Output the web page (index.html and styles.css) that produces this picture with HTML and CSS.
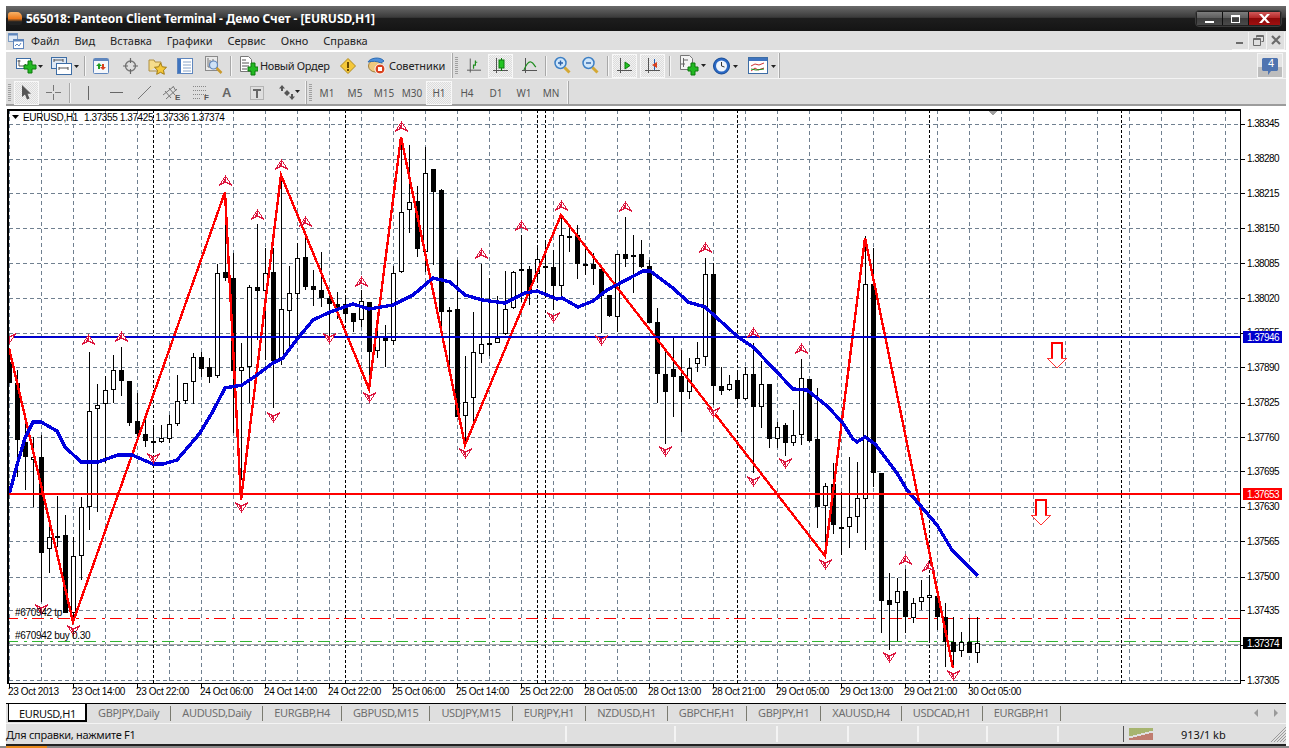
FILE: index.html
```html
<!DOCTYPE html>
<html lang="ru">
<head>
<meta charset="utf-8">
<title>565018: Panteon Client Terminal - Демо Счет - [EURUSD,H1]</title>
<link rel="stylesheet" href="styles.css">
</head>
<body>
<div class="window">
  <header class="titlebar">
    <span class="app-icon"></span>
    <span class="title">565018: Panteon Client Terminal - Демо Счет - [EURUSD,H1]</span>
    <div class="win-buttons">
      <span class="wb wb-min"><i></i></span>
      <span class="wb wb-max"><i></i></span>
      <span class="wb wb-close">
        <svg width="15" height="11" viewBox="0 0 15 11"><path d="M2 1h3l2.500 3L10 1h3L9 5.500 13 10h-3L7.500 7 5 10H2l4-4.500z" fill="#fff"/></svg>
      </span>
    </div>
  </header>

  <nav class="menubar">
    <svg class="doc-icon" width="16" height="16" viewBox="0 0 16 16"><rect x="0.500" y="0.500" width="9" height="8" fill="#dfe9f5" stroke="#7d9cc4"/><rect x="0.500" y="0.500" width="9" height="2" fill="#5f86bd"/><rect x="5.500" y="6.500" width="10" height="9" fill="#fff" stroke="#5f86bd"/><rect x="5.500" y="6.500" width="10" height="2" fill="#5f86bd"/><path d="M7 13l2-2 2 2 2-3" fill="none" stroke="#5f86bd"/></svg>
    <span class="m m1">Файл</span>
    <span class="m">Вид</span>
    <span class="m">Вставка</span>
    <span class="m">Графики</span>
    <span class="m">Сервис</span>
    <span class="m">Окно</span>
    <span class="m">Справка</span>
    <div class="mdi">
      <span class="mdi-b"><svg width="10" height="10" viewBox="0 0 10 10"><rect x="1" y="7" width="7" height="2" fill="#6b6b6b"/></svg></span>
      <span class="mdi-b"><svg width="11" height="11" viewBox="0 0 11 11"><path d="M3.500 2.500V.5h7v6h-2M.5 3.500h7v7h-7zM.5 4.500h7M3.500 1.500h7" fill="none" stroke="#6b6b6b"/></svg></span>
      <span class="mdi-b"><svg width="10" height="10" viewBox="0 0 10 10"><path d="M1 1l8 8M9 1L1 9" stroke="#6b6b6b" stroke-width="2.200"/></svg></span>
    </div>
  </nav>

  <div class="toolrow row1">
    <span class="tb w27 ml10"><svg width="27" height="20" viewBox="0 0 27 20"><rect x="0.500" y="2.500" width="14" height="10" fill="#fff" stroke="#3d6da5"/><path d="M3 4v6h8M1.500 5h3M9 8l2 2-2 2" fill="none" stroke="#555"/><path d="M8 9h4V5h4v4h4v4h-4v4h-4v-4H8z" fill="#22b822" stroke="#0c7a0c"/><path d="M22 9h5l-2.500 3z" fill="#222"/></svg></span>
    <span class="tb w29 ml8"><svg width="29" height="20" viewBox="0 0 29 20"><rect x="0.500" y="1.500" width="15" height="11" fill="#dfe9f5" stroke="#3d6da5"/><rect x="5.500" y="7.500" width="15" height="11" fill="#fff" stroke="#3d6da5"/><path d="M3 4h9M3 3v3M12 3v3M8 12h9M8 11v3M17 11v3" stroke="#555" fill="none"/><path d="M23 9h5l-2.500 3z" fill="#222"/></svg></span>
    <span class="sep ml4"></span>
    <span class="tb w17 ml7"><svg width="17" height="18" viewBox="0 0 17 18"><rect x="0.500" y="1.500" width="15" height="15" rx="1" fill="#f4f7fb" stroke="#5f86bd"/><rect x="1" y="2" width="14" height="2" fill="#5f86bd"/><path d="M6 6l3 3H7v3H5V9H3z" fill="#1f9d1f"/><path d="M10 13l3-3h-2V7H9v3H7z" fill="#d9411e"/></svg></span>
    <span class="tb w17 ml12"><svg width="17" height="18" viewBox="0 0 17 18"><circle cx="8.500" cy="9" r="5" fill="none" stroke="#777" stroke-width="1.400"/><path d="M8.500 1v5M8.500 12v5M1 9h5M11 9h5" stroke="#666" stroke-width="1.200"/></svg></span>
    <span class="tb w19 ml9"><svg width="19" height="18" viewBox="0 0 19 18"><path d="M1 14V3h5l1 2h6v3" fill="#f5dc8c" stroke="#b09040"/><path d="M1 14h8" stroke="#b09040"/><path d="M12.500 6l1.800 3.800 4.200.5-3 2.900.8 4.100-3.800-2-3.800 2 .8-4.100-3-2.900 4.200-.5z" fill="#f5c83a" stroke="#a07a10"/></svg></span>
    <span class="tb w16 ml10"><svg width="16" height="18" viewBox="0 0 16 18"><rect x="0.500" y="1.500" width="15" height="15" fill="#fff" stroke="#5f86bd"/><rect x="1" y="2" width="3" height="14" fill="#3f74bf"/><path d="M6 5h8M6 8h8M6 11h8M6 14h8" stroke="#8aa5c8"/></svg></span>
    <span class="tb w18 ml12"><svg width="18" height="19" viewBox="0 0 18 19"><rect x="0.500" y="0.500" width="12" height="14" fill="#e9e9e9" stroke="#8a8a8a"/><path d="M3 2v9h8M5 4v4M8 3v5" stroke="#777" fill="none"/><circle cx="8.500" cy="9" r="4" fill="#cfe2f6" stroke="#5f86bd" stroke-width="1.200"/><path d="M11.500 12l5 5" stroke="#c99a2e" stroke-width="2.500"/></svg></span>
    <span class="sep ml7"></span>
    <span class="tb w18 ml8"><svg width="18" height="20" viewBox="0 0 18 20"><path d="M0.500 0.500h8l3 3v12h-11z" fill="#fff" stroke="#777"/><path d="M2 4h4M2 7h7M2 10h7M2 13h5" stroke="#555"/><path d="M8 11h3V7h4v4h3v4h-3v4h-4v-4H8z" fill="#22b822" stroke="#0c7a0c"/></svg></span>
    <span class="tb-text t-order">Новый Ордер</span>
    <span class="tb w16 ml11"><svg width="16" height="16" viewBox="0 0 16 16"><path d="M8 .5L15.500 8 8 15.500.5 8z" fill="#f5c83a" stroke="#b08a20"/><path d="M7 4h2v6H7zM7 11h2v2H7z" fill="#6a4a00"/></svg></span>
    <span class="tb w19 ml11"><svg width="19" height="19" viewBox="0 0 19 19"><ellipse cx="8.500" cy="10" rx="7" ry="6" fill="#f0c97e" stroke="#a0803a"/><path d="M1 6c2-4 12-6 16-1l-3 2c-4-2-9-2-13-1z" fill="#4f8fd9" stroke="#2d6cb3"/><circle cx="13" cy="13" r="5" fill="#d9411e" stroke="#fff"/><rect x="11" y="11" width="4" height="4" fill="#fff"/></svg></span>
    <span class="tb-text t-exp">Советники</span>
    <span class="bar-end b1"></span>
    <span class="gripper"></span>
    <span class="tb w14 ml9"><svg width="15" height="16" viewBox="0 0 15 16"><path d="M3.500 0v15M0 12.500h15" fill="none" stroke="#555"/><path d="M7 11V7h2V2" fill="none" stroke="#1f8d1f" stroke-width="1.300"/><path d="M9 4h2" stroke="#1f8d1f"/></svg></span>
    <span class="tb btn-on ml7"><svg width="15" height="17" viewBox="0 0 15 17"><path d="M3.500 1v15M0 13.500h15" stroke="#555" fill="none"/><path d="M8.500 1v13" stroke="#0c7a0c"/><rect x="6" y="3" width="5" height="8" fill="#22c422" stroke="#0c7a0c"/></svg></span>
    <span class="tb w15 ml9"><svg width="15" height="16" viewBox="0 0 15 16"><path d="M3.500 0v15M0 12.500h15" stroke="#555" fill="none"/><path d="M2 12C4 7 6 3 9 4s3 4 5 5" fill="none" stroke="#1f8d1f" stroke-width="1.200"/></svg></span>
    <span class="sep ml8"></span>
    <span class="tb w17 ml7"><svg width="17" height="19" viewBox="0 0 17 19"><circle cx="6.500" cy="7" r="5.500" fill="#cfe6fa" stroke="#3d7fc4" stroke-width="1.500"/><path d="M4 7h5M6.500 4.500v5" stroke="#2a60a8" stroke-width="1.400"/><path d="M10.500 11.500l5 5" stroke="#d4a834" stroke-width="3"/></svg></span>
    <span class="tb w17 ml11"><svg width="17" height="19" viewBox="0 0 17 19"><circle cx="6.500" cy="7" r="5.500" fill="#cfe6fa" stroke="#3d7fc4" stroke-width="1.500"/><path d="M4 7h5" stroke="#2a60a8" stroke-width="1.400"/><path d="M10.500 11.500l5 5" stroke="#d4a834" stroke-width="3"/></svg></span>
    <span class="sep ml8"></span>
    <span class="tb btn-on ml3"><svg width="15" height="17" viewBox="0 0 15 17"><path d="M3.500 1v15M0 13.500h15" stroke="#555" fill="none"/><path d="M8 5l5 3.500-5 3.500z" fill="#22c422" stroke="#0c7a0c"/></svg></span>
    <span class="tb btn-on ml3"><svg width="15" height="17" viewBox="0 0 15 17"><path d="M3.500 1v15M0 13.500h15" stroke="#555" fill="none"/><path d="M9.500 2v11" stroke="#1f5fb8"/><path d="M7 8l5-3v6z" fill="#d9411e"/></svg></span>
    <span class="sep ml4"></span>
    <span class="tb w26 ml9"><svg width="26" height="21" viewBox="0 0 26 21"><path d="M0.500 0.500h9l3 3v11h-12z" fill="#f4f4f4" stroke="#777"/><path d="M3.500 3v9M1 9h4M3 5h5" fill="none" stroke="#666"/><path d="M8 12h3V8h4v4h3v4h-3v4h-4v-4H8z" fill="#22b822" stroke="#0c7a0c"/><path d="M21 9h5l-2.500 3z" fill="#222"/></svg></span>
    <span class="tb w25 ml7"><svg width="25" height="20" viewBox="0 0 25 20"><circle cx="8.500" cy="10" r="8" fill="#2a68c4" stroke="#154a94"/><circle cx="8.500" cy="10" r="5.500" fill="#eef4fb"/><path d="M8.500 6v4l3 1" fill="none" stroke="#333"/><path d="M20 9h5l-2.500 3z" fill="#222"/></svg></span>
    <span class="tb w28 ml10"><svg width="28" height="18" viewBox="0 0 28 18"><rect x="0.500" y="0.500" width="19" height="16" fill="#fff" stroke="#3d6da5"/><rect x="1" y="1" width="18" height="3" fill="#3f74bf"/><path d="M3 9l4-2 4 1 5-2M3 14l4-3 3 2 6-2" fill="none" stroke="#c33"/><path d="M3 12l5 1 8-1" fill="none" stroke="#1f8d1f"/><path d="M23 8h5l-2.500 3z" fill="#222"/></svg></span>
    <span class="bar-end b2"></span>
    <span class="notify">
      <svg width="16" height="17" viewBox="0 0 16 17"><path d="M1 0h14l1 1v11l-1 1H9l-3 4v-4H1l-1-1V1z" fill="#4f74b0"/></svg>
      <b>4</b>
    </span>
  </div>

  <div class="toolrow row2">
    <span class="gripper g0"></span>
    <span class="tb btn-on cur"><svg width="11" height="15" viewBox="0 0 11 15"><path d="M1 0v12l3-2.500 2 5 2.500-1-2-4.700H10z" fill="#555"/></svg></span>
    <span class="tb w15 ml7"><svg width="15" height="15" viewBox="0 0 15 15"><path d="M7.500 0v6M7.500 9v6M0 7.500h6M9 7.500h6" stroke="#777"/></svg></span>
    <span class="sep ml8"></span>
    <span class="tb w3 ml16"><svg width="3" height="14" viewBox="0 0 3 14"><path d="M1.500 0v14" stroke="#666"/></svg></span>
    <span class="tb w13 ml20"><svg width="13" height="3" viewBox="0 0 13 3"><path d="M0 1.500h13" stroke="#666"/></svg></span>
    <span class="tb w13 ml15"><svg width="13" height="13" viewBox="0 0 13 13"><path d="M0 13L13 0" stroke="#777"/></svg></span>
    <span class="tb w18 ml12"><svg width="18" height="18" viewBox="0 0 18 18"><path d="M0 11L10 3M3 15L14 5M2 7l6 7M6 4l6 7M10 2l3 5" stroke="#777" fill="none"/><text x="12" y="16" class="mini">E</text></svg></span>
    <span class="tb w17 ml12"><svg width="17" height="18" viewBox="0 0 17 18"><path d="M0 2.500h14M0 6.500h14M0 10.500h14M0 14.500h8" stroke="#888" stroke-dasharray="1 1"/><text x="11" y="16" class="mini">F</text></svg></span>
    <span class="tb-letter">A</span>
    <span class="tb w14 ml16"><svg width="14" height="14" viewBox="0 0 14 14"><rect x="0.500" y="0.500" width="13" height="13" fill="none" stroke="#888" stroke-dasharray="1 1"/><path d="M3 3h8v2H8v7H6V5H3z" fill="#666"/></svg></span>
    <span class="tb w22 ml14"><svg width="22" height="16" viewBox="0 0 22 16"><path d="M4 0l3 3.500H5V6H3V3.500H1zM9 5l3 3-3 3-3-3zM14 15l-3-3.500h2V9h2v2.500h2z" fill="#555"/><path d="M17 5h5l-2.500 3z" fill="#222"/></svg></span>
    <span class="bar-end b3"></span>
    <span class="gripper g2"></span>
    <span class="per p1">M1</span>
    <span class="per p2">M5</span>
    <span class="per p3">M15</span>
    <span class="per p4">M30</span>
    <span class="per per-on">H1</span>
    <span class="per p5">H4</span>
    <span class="per p6">D1</span>
    <span class="per p7">W1</span>
    <span class="per p8">MN</span>
    <span class="bar-end b4"></span>
  </div>

  <main class="chartbox">
    <svg id="chart" class="chart" width="1280" height="597" viewBox="6 106 1280 597">
      <g id="plot"></g>
      <path d="M12 115h7l-3.500 4z" fill="#000"/>
      <text x="23" y="121" class="t tight">EURUSD,H1</text>
      <text x="84" y="121" class="t tight2">1.37355 1.37425 1.37336 1.37374</text>
      <text x="15" y="616" class="t tight">#670942 tp</text>
      <text x="15" y="639" class="t tight">#670942 buy 0.30</text>
      <g class="t price">
        <text x="1247" y="127">1.38345</text>
        <text x="1247" y="162">1.38280</text>
        <text x="1247" y="197">1.38215</text>
        <text x="1247" y="232">1.38150</text>
        <text x="1247" y="267">1.38085</text>
        <text x="1247" y="302">1.38020</text>
        <text x="1247" y="336">1.37955</text>
        <text x="1247" y="371">1.37890</text>
        <text x="1247" y="406">1.37825</text>
        <text x="1247" y="441">1.37760</text>
        <text x="1247" y="475">1.37695</text>
        <text x="1247" y="510">1.37630</text>
        <text x="1247" y="545">1.37565</text>
        <text x="1247" y="580">1.37500</text>
        <text x="1247" y="614">1.37435</text>
        <text x="1247" y="684">1.37305</text>
      </g>
      <rect x="1243" y="331" width="39" height="12" fill="#0000cd"/>
      <text x="1247" y="341" class="t w price1">1.37946</text>
      <rect x="1243" y="488" width="39" height="12" fill="#ff0000"/>
      <text x="1247" y="498" class="t w price1">1.37653</text>
      <rect x="1243" y="637" width="39" height="12" fill="#000"/>
      <text x="1247" y="647" class="t w price1">1.37374</text>
      <g class="t dates">
        <text x="8" y="695">23 Oct 2013</text>
        <text x="72" y="695">23 Oct 14:00</text>
        <text x="136" y="695">23 Oct 22:00</text>
        <text x="200" y="695">24 Oct 06:00</text>
        <text x="264" y="695">24 Oct 14:00</text>
        <text x="328" y="695">24 Oct 22:00</text>
        <text x="392" y="695">25 Oct 06:00</text>
        <text x="456" y="695">25 Oct 14:00</text>
        <text x="520" y="695">25 Oct 22:00</text>
        <text x="584" y="695">28 Oct 05:00</text>
        <text x="648" y="695">28 Oct 13:00</text>
        <text x="712" y="695">28 Oct 21:00</text>
        <text x="776" y="695">29 Oct 05:00</text>
        <text x="840" y="695">29 Oct 13:00</text>
        <text x="904" y="695">29 Oct 21:00</text>
        <text x="968" y="695">30 Oct 05:00</text>
      </g>
    </svg>
  </main>

  <div class="tabs">
    <span class="tab tab-on">EURUSD,H1</span>
    <span class="tab">GBPJPY,Daily</span>
    <span class="tab">AUDUSD,Daily</span>
    <span class="tab">EURGBP,H4</span>
    <span class="tab">GBPUSD,M15</span>
    <span class="tab">USDJPY,M15</span>
    <span class="tab">EURJPY,H1</span>
    <span class="tab">NZDUSD,H1</span>
    <span class="tab">GBPCHF,H1</span>
    <span class="tab">GBPJPY,H1</span>
    <span class="tab">XAUUSD,H4</span>
    <span class="tab">USDCAD,H1</span>
    <span class="tab">EURGBP,H1</span>
    <span class="tab-nav"><svg width="24" height="9" viewBox="0 0 24 9"><path d="M4 0v8L0 4zM20 0v8l4-4z" fill="#9a9a9a"/></svg></span>
  </div>

  <footer class="status">
    <span class="st-help">Для справки, нажмите F1</span>
    <span class="st c1"></span>
    <span class="st c2"></span>
    <span class="st c3"></span>
    <span class="st c4"></span>
    <span class="st c5"></span>
    <span class="st c6"></span>
    <span class="st c7"></span>
    <span class="st c8">
      <svg width="24" height="13" viewBox="0 0 24 13" class="conn"><path d="M1 0v8M3 0v8M5 0v7M7 0v7M9 0v6M11 0v6M13 0v5M15 0v5M17 0v4M19 0v4M21 0v3M23 0v3" stroke="#6f8a00"/><path d="M1 12v-2M3 12v-2M5 12v-3M7 12v-3M9 12v-4M11 12v-4M13 12V7M15 12V7M17 12V6M19 12V6M21 12V5M23 12V5" stroke="#a01a00"/></svg>
      <span class="kb">913/1 kb</span>
      <svg width="15" height="15" viewBox="0 0 15 15" class="grip"><path d="M15 0L0 15M15 3L3 15M15 6L6 15M15 9L9 15M15 12L12 15" stroke="#9a9a9a"/></svg>
    </span>
  </footer>
  <div class="frame-bottom"></div>
</div>
<div class="taskbar"><span class="task-orange"></span></div>
<script src="chart.js"></script>
</body>
</html>
```

FILE: styles.css
```css
* { box-sizing: border-box; }
html, body { margin: 0; padding: 0; height: 748px; overflow: hidden; background: #fff; }
body { font: 11px "Noto Sans", "Liberation Sans", sans-serif; color: #333; position: relative; }
.window { margin: 6px 0 0 6px; width: 1280px; display: flex; flex-direction: column; background: #e0e0e0; }

.titlebar { height: 25px; display: flex; align-items: center; background: linear-gradient(#6a6a6a 0, #3a3a3a 45%, #1d1d1d 50%, #141414 100%); flex: none; }
.app-icon { width: 14px; height: 13px; margin-left: 2px; border-radius: 3px 5px 3px 3px; background: linear-gradient(#f7b267 0, #ee7a1c 50%, #222 75%); flex: none; }
.title { margin-left: 4px; color: #fff; font: bold 12px "Noto Sans", sans-serif; letter-spacing: -0.05px; white-space: nowrap; }
.win-buttons { margin-left: auto; margin-right: 4px; display: flex; padding: 1px; border: 1px solid #3c3c3c; border-radius: 4px; background: #222; }
.wb { width: 26px; height: 13px; display: flex; align-items: center; justify-content: center; border-right: 1px solid #111; background: linear-gradient(#7d7d7d, #5a5a5a 50%, #3d3d3d 50%, #4a4a4a); }
.wb-close { width: 31px; border: 0; background: linear-gradient(#d15a5a, #b02020 50%, #8c0808 50%, #a01010); }
.wb-min i { width: 9px; height: 2px; background: #fff; margin-top: 6px; }
.wb-max i { width: 9px; height: 8px; border: 1px solid #fff; border-top-width: 2px; }

.menubar { height: 20px; display: flex; align-items: center; gap: 15px; background: #dfdfdf; color: #222; border-bottom: 1px solid #fff; flex: none; font-size: 11px; }
.doc-icon { margin-left: 2px; margin-right: -8px; flex: none; }
.m { white-space: nowrap; }
.mdi { margin-left: auto; display: flex; gap: 1px; margin-right: 1px; }
.mdi-b { width: 17px; height: 18px; display: flex; align-items: center; justify-content: center; border-right: 1px solid #f4f4f4; border-bottom: 1px solid #f4f4f4; }

.toolrow { display: flex; align-items: center; flex: none; background: #dedede; color: #444; }
.row1 { height: 27px; padding-top: 1px; border-top: 1px solid #fff; }
.row2 { height: 28px; padding-top: 2px; border-top: 1px solid #f4f4f4; border-bottom: 2px solid #9c9c9c; }
.tb { display: inline-flex; align-items: center; justify-content: center; flex: none; }
.tb svg { display: block; }
.w3 { width: 3px; } .w13 { width: 13px; } .w14 { width: 14px; } .w15 { width: 15px; } .w16 { width: 16px; } .w17 { width: 17px; } .w18 { width: 18px; } .w19 { width: 19px; } .w22 { width: 22px; } .w25 { width: 25px; } .w26 { width: 26px; } .w27 { width: 27px; } .w28 { width: 28px; } .w29 { width: 29px; }
.ml3 { margin-left: 3px; } .ml4 { margin-left: 4px; } .ml7 { margin-left: 7px; } .ml8 { margin-left: 8px; } .ml9 { margin-left: 9px; } .ml10 { margin-left: 10px; } .ml11 { margin-left: 11px; } .ml12 { margin-left: 12px; } .ml14 { margin-left: 14px; } .ml15 { margin-left: 15px; } .ml16 { margin-left: 16px; } .ml20 { margin-left: 20px; }
.sep { width: 2px; height: 20px; flex: none; border-left: 1px solid #a8a8a8; border-right: 1px solid #f6f6f6; }
.tb-text { white-space: nowrap; color: #222; flex: none; }
.t-order { margin-left: 2px; width: 69px; letter-spacing: -0.35px; }
.t-exp { margin-left: 3px; width: 56px; letter-spacing: -0.1px; }
.bar-end { width: 2px; align-self: stretch; flex: none; border-left: 1px solid #f4f4f4; border-right: 1px solid #a8a8a8; }
.b1 { margin-left: 6px; }
.b2 { margin-left: 2px; }
.b3 { margin-left: 5px; }
.b4 { margin-left: 7px; }
.gripper { width: 3px; height: 18px; flex: none; margin-left: 2px; background: repeating-linear-gradient(#a0a0a0 0 1px, transparent 1px 2px); }
.btn-on { width: 25px; height: 24px; background-color: #eeeeee; background-image: repeating-conic-gradient(#dcdcdc 0 25%, #f2f2f2 0 50%); background-size: 2px 2px; border: 1px solid #f8f8f8; }
.g0 { margin-left: 2px; }
.cur { margin-left: 3px; }
.mini { font: bold 8px "Liberation Sans", sans-serif; fill: #555; }
.tb-letter { font: bold 13px "Liberation Sans", sans-serif; color: #666; margin-left: 12px; width: 12px; flex: none; }
.per { color: #555; font-size: 10px; flex: none; text-align: center; }
.p1 { margin-left: 6px; width: 18px; }
.p2 { margin-left: 10px; width: 18px; }
.p3 { margin-left: 8px; width: 24px; }
.p4 { margin-left: 4px; width: 24px; }
.per-on { margin-left: 2px; width: 26px; height: 24px; line-height: 22px; background-color: #eee; background-image: repeating-conic-gradient(#dcdcdc 0 25%, #f2f2f2 0 50%); background-size: 2px 2px; border: 1px solid #f8f8f8; }
.p5 { margin-left: 6px; width: 18px; }
.p6 { margin-left: 11px; width: 18px; }
.p7 { margin-left: 10px; width: 18px; }
.p8 { margin-left: 9px; width: 18px; }
.notify { margin-left: auto; margin-right: 3px; width: 26px; height: 25px; position: relative; display: flex; justify-content: center; align-items: flex-start; padding-top: 4px; border: 1px solid #f4f4f4; background: linear-gradient(#e4e4e4 55%, #bdbdbd 55%); flex: none; }
.notify b { position: absolute; left: 10px; top: 3px; color: #fff; font: 11px "Liberation Sans", sans-serif; }

.chartbox { height: 597px; background: #fff; flex: none; }
.chart { display: block; }
.t, .t text { font: 10px "Liberation Sans", sans-serif; fill: #000; }
.tight { letter-spacing: -0.3px; }
.tight2 { letter-spacing: -0.4px; }
.price text, .price1 { letter-spacing: -0.6px; }
.dates text { letter-spacing: -0.35px; }
.t.w { fill: #fff; }

.tabs { height: 21px; display: flex; align-items: flex-start; flex: none; border-top: 1px solid #000; background: #dfdfdf; color: #6f6f6f; border-bottom: 1px solid #f4f4f4; font-size: 11px; }
.tab { padding: 0 11px; height: 15px; margin-top: 2px; border-right: 1px solid #7a7a70; white-space: nowrap; line-height: 14px; letter-spacing: -0.35px; }
.tab-on { margin-left: 2px; margin-top: -1px; width: 79px; height: 19px; background: #fff; color: #111; border: 1px solid #000; border-width: 1px 2px 2px 1px; padding: 3px 0 0 10px; }
.tab-nav { margin-left: auto; margin-right: 8px; align-self: center; }

.status { height: 20px; display: flex; align-items: center; background: #dfdfdf; color: #111; flex: none; font-size: 11px; }
.st-help { white-space: nowrap; width: 559px; letter-spacing: -0.27px; flex: none; }
.st { height: 16px; border-left: 2px solid #f4f4f4; flex: none; }
.c1 { width: 109px; }
.c2 { width: 102px; }
.c3 { width: 71px; }
.c4 { width: 70px; }
.c5 { width: 69px; }
.c6 { width: 71px; }
.c7 { width: 66px; }
.c8 { width: 163px; border-left: 1px solid #555; display: flex; align-items: center; }
.conn { margin-left: 5px; }
.kb { margin-left: 28px; }
.grip { margin-left: auto; align-self: flex-end; }
.frame-bottom { height: 2px; background: #222; flex: none; }
.taskbar { position: absolute; left: 0; right: 0; top: 746px; height: 2px; background: #8a8a8a; }
.task-orange { position: absolute; left: 6px; top: 0; width: 41px; height: 2px; background: #e88a1c; }
```

FILE: chart.js
```js
var NS = 'http://www.w3.org/2000/svg';
var plot = document.getElementById('plot');

function el(name, attrs, parent) {
  var e = document.createElementNS(NS, name);
  for (var k in attrs) e.setAttribute(k, attrs[k]);
  (parent || plot).appendChild(e);
  return e;
}

/* high, body top, body bottom, low, black(1)/hollow(0); candles are 8px apart from x=9 */
var candles = [
[352,362,383,383,1],[370,383,440,477,1],[420,442,457,490,1],[437,457,460,507,0],[435,457,553,602,1],[527,537,549,573,0],
[496,536,538,547,0],[515,535,613,613,1],[537,556,613,622,0],[497,507,556,580,0],[352,411,507,530,0],[384,405,409,512,0],
[376,390,404,463,0],[355,370,390,403,0],[347,370,381,396,1],[381,381,423,426,1],[393,421,434,438,1],[420,434,441,447,1],
[427,441,442,453,1],[425,438,442,443,0],[415,424,439,443,0],[375,401,424,426,0],[383,383,401,404,0],[353,357,382,404,0],
[352,357,369,377,1],[358,367,377,383,1],[264,273,376,378,0],[211,272,278,281,1],[253,278,371,433,1],[343,367,371,480,0],
[285,287,367,403,0],[224,287,291,340,1],[248,273,291,360,0],[248,272,361,408,1],[175,309,359,365,0],[266,293,311,350,0],
[243,258,294,337,0],[235,257,287,290,1],[270,286,290,306,1],[252,290,298,307,1],[290,298,304,340,1],[292,304,307,319,1],
[295,304,314,323,1],[313,313,322,332,1],[290,301,320,327,0],[302,302,352,383,1],[327,337,351,358,0],[325,338,341,367,1],
[266,273,341,345,0],[137,212,272,273,0],[145,202,210,233,0],[186,201,249,257,1],[147,173,252,272,0],[169,169,192,265,1],
[189,190,312,337,1],[307,310,312,367,0],[260,309,417,417,1],[356,402,416,443,0],[312,352,398,423,0],[264,344,354,363,0],
[278,343,345,356,1],[296,338,343,343,0],[271,309,334,335,0],[271,272,308,309,0],[235,269,270,302,1],[266,269,294,305,1],
[248,259,274,280,0],[243,266,267,298,1],[250,267,286,310,1],[217,235,286,297,0],[225,236,237,252,1],[225,235,264,279,1],
[247,264,265,275,1],[253,264,269,285,1],[265,269,296,333,1],[295,295,316,317,1],[254,254,317,332,0],[217,254,259,267,1],
[235,255,257,293,0],[240,254,267,268,1],[260,266,323,323,1],[308,322,374,403,1],[350,374,392,444,1],[338,369,377,417,1],
[350,376,392,432,1],[358,368,392,399,0],[342,358,364,372,0],[258,274,357,366,0],[263,274,386,405,1],[367,386,391,395,1],
[375,384,390,391,0],[371,380,399,406,1],[367,374,399,400,0],[343,374,407,473,1],[361,384,407,428,0],[384,384,439,448,1],
[422,427,439,448,0],[423,425,443,456,1],[410,435,443,446,0],[359,378,435,445,0],[379,379,441,442,1],[388,439,507,528,1],
[483,486,506,555,0],[463,484,525,534,1],[492,527,528,555,1],[457,517,527,548,0],[462,498,517,533,0],[236,284,499,550,0],
[248,284,473,487,1],[473,473,601,633,1],[573,600,605,650,1],[578,591,603,641,0],[569,591,617,633,1],[598,603,618,623,0],
[580,597,602,610,0],[577,595,598,642,0],[596,596,617,630,1],[603,617,642,667,1],[617,642,652,668,1],[632,642,651,657,0],
[618,642,653,653,1],[617,643,653,663,0]
];

var ma = [[9,495],[17,465],[25,438],[33,422],[41,422],[57,431],[65,447],[81,462],[98,462],[118,455],[132,455],[153,464],[163,464],[177,460],[200,433],[212,413],[225,388],[242,385],[257,375],[273,363],[283,358],[298,338],[313,320],[330,312],[353,304],[369,309],[393,305],[413,295],[433,278],[450,282],[465,295],[482,300],[505,303],[525,293],[537,291],[557,299],[562,298],[578,307],[593,301],[607,290],[643,271],[650,271],[673,288],[688,302],[705,307],[738,337],[753,347],[793,389],[807,390],[827,406],[842,422],[853,439],[857,442],[865,437],[875,444],[897,473],[907,490],[937,525],[952,550],[978,576]];
var zigzag = [[9,348],[73,622],[225,192],[241,500],[281,175],[369,389],[401,137],[465,445],[561,215],[825,556],[865,238],[953,668]];
var ups = [[88,340],[121,337],[225,181],[257,215],[281,165],[305,222],[361,282],[401,127],[481,254],[521,226],[561,206],[625,207],[705,248],[753,333],[801,349],[905,560],[928,567]];
var downs = [[9,338],[41,609],[73,630],[153,458],[241,507],[273,417],[329,338],[369,397],[465,453],[553,317],[601,340],[665,451],[713,412],[753,481],[785,463],[825,564],[889,657],[953,675]];
var priceYs = [124,159,193,228,263,298,333,367,403,437,471,507,541,577,610,645,680];
var separators = [153,345,537,545,737,929,1121];
var L = 9, R = 1240, T = 110, B = 683;

function pts(a) { return a.map(function (p) { return p.join(','); }).join(' '); }

var defs = el('defs', {});
var cp = el('clipPath', { id: 'plotclip' }, defs);
el('rect', { x: L, y: T, width: R - L, height: B - T }, cp);

var root = el('g', { 'shape-rendering': 'crispEdges' });
var clip = el('g', { 'clip-path': 'url(#plotclip)' }, root);

/* grid */
var x;
for (x = 9; x < R; x += 32) el('path', { d: 'M' + (x + .5) + ' ' + T + 'V' + B, stroke: '#708090', 'stroke-dasharray': '4 3', fill: 'none' }, clip);
priceYs.forEach(function (py) { el('path', { d: 'M' + L + ' ' + (py + .5) + 'H' + R, stroke: '#708090', 'stroke-dasharray': '4 3', fill: 'none' }, clip); });
separators.forEach(function (sx) { el('path', { d: 'M' + (sx + .5) + ' ' + T + 'V' + B, stroke: '#000', 'stroke-dasharray': '3 2', fill: 'none' }, clip); });

/* price line levels */
el('path', { d: 'M9 644.5H1240', stroke: '#a8a8a8' }, clip);
el('path', { d: 'M6 618.5H1240', stroke: '#ff0000', 'stroke-dasharray': '12 6 3 5' }, clip);
el('path', { d: 'M6 641.5H1240', stroke: '#32b432', 'stroke-dasharray': '12 6 3 5' }, clip);

/* candles */
candles.forEach(function (c, n) {
  var cx = 9 + n * 8;
  el('path', { d: 'M' + (cx + .5) + ' ' + c[0] + 'V' + c[3], stroke: '#000' }, clip);
  var h = c[2] - c[1];
  if (c[4] || h < 2) {
    el('rect', { x: cx - 2, y: c[1], width: 5, height: Math.max(h, 2), fill: '#000' }, clip);
  } else {
    el('rect', { x: cx - 1.5, y: c[1] + .5, width: 4, height: h - 1, fill: '#fff', stroke: '#000' }, clip);
  }
});

/* zigzag, moving average */
el('polyline', { points: pts(zigzag), fill: 'none', stroke: '#ff0000', 'stroke-width': 2.4 }, clip);
el('polyline', { points: pts(ma), fill: 'none', stroke: '#0000dd', 'stroke-width': 3.4 }, clip);

/* horizontal levels */
el('rect', { x: 9, y: 336, width: R - 9, height: 2, fill: '#0000cd' }, clip);
el('rect', { x: 9, y: 493, width: R - 9, height: 2, fill: '#ff0000' }, clip);

/* fractal markers */
function marker(m, flip) {
  var s = flip ? -1 : 1;
  var g = el('g', { transform: 'translate(' + m[0] + '.5,' + m[1] + ') scale(1,' + s + ')' }, clip);
  el('path', { d: 'M0 -5L-6 4L0 1L6 4Z', fill: '#fff', stroke: '#dc143c' }, g);
  el('path', { d: 'M0 -4L-3 2L0 1Z', fill: '#dc143c' }, g);
}
ups.forEach(function (m) { marker(m, false); });
downs.forEach(function (m) { marker(m, true); });

/* hollow down arrows: thin head, thick shaft */
function bigArrow(l, t) {
  el('polygon', { points: (l - 5) + ',' + (t + 15) + ' ' + (l + 15) + ',' + (t + 15) + ' ' + (l + 5) + ',' + (t + 25), fill: '#fff', stroke: '#ff3030' }, clip);
  el('path', { d: 'M' + l + ' ' + (t + 15) + 'V' + t + 'H' + (l + 10) + 'V' + (t + 15), fill: '#fff', stroke: '#ff0000', 'stroke-width': 2 }, clip);
  el('rect', { x: l + 1, y: t + 14, width: 8, height: 3, fill: '#fff' }, clip);
}
bigArrow(1052, 343);
bigArrow(1036, 500);

/* shift marker */
el('path', { d: 'M987 110h12l-6 5z', fill: '#a0a0a0' }, root);

/* frame and axis ticks */
el('rect', { x: 8.5, y: 110.5, width: 1232, height: 573, fill: 'none', stroke: '#000' }, root);
el('rect', { x: 7.5, y: 109.5, width: 1233, height: 574, fill: 'none', stroke: '#000' }, root);
priceYs.forEach(function (py) { el('path', { d: 'M1241 ' + (py + .5) + 'h4', stroke: '#000' }, root); });
for (x = 9; x < 1000; x += 64) el('path', { d: 'M' + (x + .5) + ' 684v4', stroke: '#000' }, root);
```
